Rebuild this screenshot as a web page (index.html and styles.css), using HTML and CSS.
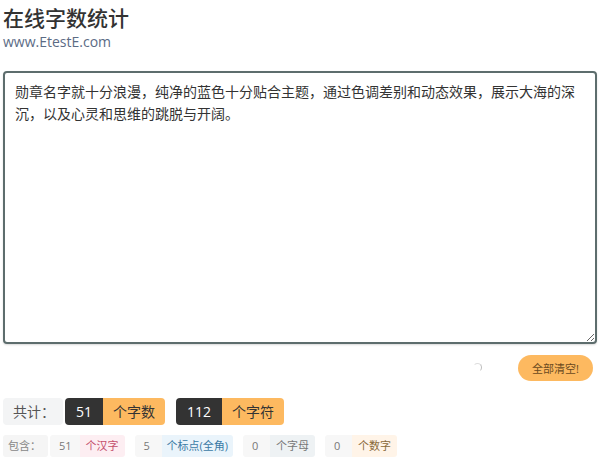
FILE: index.html
```html
<!DOCTYPE html>
<html lang="zh">
<head>
<meta charset="utf-8">
<link rel="stylesheet" href="styles.css">
</head>
<body>
<div class="page">
  <header class="head">
    <h1 class="title">在线字数统计</h1>
    <div class="site">www.EtestE.com</div>
  </header>
  <textarea class="editor">勋章名字就十分浪漫，纯净的蓝色十分贴合主题，通过色调差别和动态效果，展示大海的深沉，以及心灵和思维的跳脱与开阔。</textarea>
  <div class="actions">
    <span class="spinner"></span>
    <button class="clear">全部清空!</button>
  </div>
  <div class="totals">
    <span class="lbl">共计：</span>
    <span class="pair"><span class="num">51</span><span class="unit">个字数</span></span>
    <span class="pair"><span class="num">112</span><span class="unit">个字符</span></span>
  </div>
  <div class="details">
    <span class="dlbl">包含：</span>
    <span class="dpair"><span class="dnum">51</span><span class="dunit pink">个汉字</span></span>
    <span class="dpair"><span class="dnum">5</span><span class="dunit blue">个标点(全角)</span></span>
    <span class="dpair"><span class="dnum">0</span><span class="dunit grey">个字母</span></span>
    <span class="dpair"><span class="dnum">0</span><span class="dunit peach">个数字</span></span>
  </div>
</div>
</body>
</html>
```

FILE: styles.css
```css
* { box-sizing: border-box; }
html, body { margin: 0; padding: 0; background: #fff; }
body {
  font-family: "Open Sans", "Noto Sans CJK SC", sans-serif;
  color: #333;
}
.page { padding: 4px 3px 0 3px; }
.head { height: 67px; }
.title {
  margin: 0;
  font-size: 21px;
  font-weight: 500;
  line-height: 28px;
  color: #333;
}
.site {
  font-size: 14px;
  line-height: 18px;
  color: #5b6b85;
  margin-top: 1px;
}
.editor {
  display: block;
  width: 594px;
  height: 273px;
  border: 2px solid #5d6d6d;
  border-radius: 4px;
  padding: 8px 10px;
  font-family: "Open Sans", "Noto Sans CJK SC", sans-serif;
  font-size: 14px;
  line-height: 22px;
  color: #333;
  resize: both;
  outline: none;
  box-shadow: 0 1px 2px rgba(0,0,0,0.15);
}
.actions {
  display: flex;
  justify-content: flex-end;
  align-items: center;
  height: 47px;
  padding-right: 4px;
  gap: 36px;
}
.spinner {
  width: 9px;
  height: 9px;
  border-radius: 50%;
  border: 1.5px solid transparent;
  border-right-color: #bbb;
  border-top-color: #ddd;
}
.clear {
  height: 26px;
  width: 75px;
  border: none;
  border-radius: 13px;
  background: #fdb960;
  color: #6a4a1e;
  font-family: "Open Sans", "Noto Sans CJK SC", sans-serif;
  font-size: 11px;
  padding: 0;
}
.totals {
  display: flex;
  align-items: center;
  gap: 11px;
  height: 27px;
  margin-top: 7px;
  font-size: 14px;
}
.lbl {
  background: #f3f4f5;
  color: #555;
  height: 27px;
  line-height: 27px;
  width: 60px;
  padding-left: 10px;
  border-radius: 4px;
  margin-right: -9px;
}
.pair {
  display: flex;
  height: 27px;
  line-height: 27px;
  border-radius: 4px;
  overflow: hidden;
}
.num {
  background: #333;
  color: #fff;
  padding: 0 11px;
  min-width: 38px;
  text-align: center;
}
.unit {
  background: #fdb960;
  color: #333;
  padding: 0 10px;
}
.details {
  display: flex;
  align-items: center;
  gap: 10px;
  height: 22px;
  margin-top: 10px;
  font-size: 11px;
}
.dlbl {
  background: #f5f5f5;
  color: #888;
  height: 22px;
  line-height: 22px;
  width: 45px;
  padding-left: 5px;
  border-radius: 3px;
  margin-right: -8px;
}
.dpair {
  display: flex;
  height: 22px;
  line-height: 22px;
  border-radius: 3px;
  overflow: hidden;
}
.dnum {
  background: #f7f7f7;
  color: #777;
  min-width: 27px;
  padding: 0 8px 0 9px;
}
.dunit { padding: 0 6px; }
.pink { background: #fdeef2; color: #c4506c; }
.blue { background: #eaf4fb; color: #3a7aa5; padding: 0 5px; }
.grey { background: #eef2f4; color: #777; }
.peach { background: #fff4e8; color: #8a6a3a; }
```
